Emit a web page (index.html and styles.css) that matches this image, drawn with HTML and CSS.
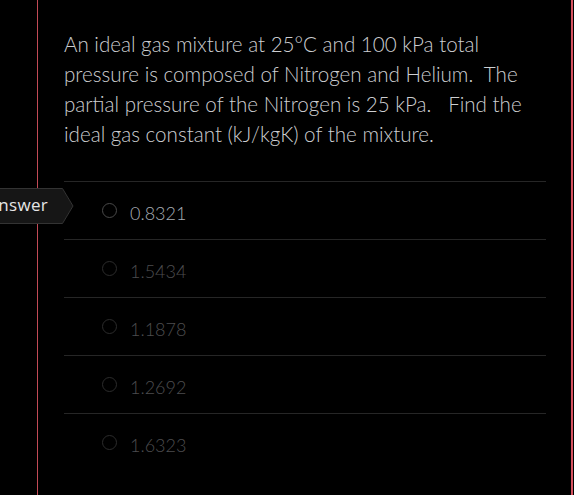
FILE: index.html
```html
<!DOCTYPE html>
<html>
<head>
<meta charset="utf-8">
<link rel="stylesheet" href="styles.css">
</head>
<body>
<div class="frame">
  <p class="question">An ideal gas mixture at 25°C and 100 kPa total pressure is composed of Nitrogen and Helium.  The partial pressure of the Nitrogen is 25 kPa.   Find the ideal gas constant (kJ/kgK) of the mixture.</p>
  <ul class="options">
    <li class="option active"><span class="radio"></span><span class="label">0.8321</span></li>
    <li class="option"><span class="radio"></span><span class="label">1.5434</span></li>
    <li class="option"><span class="radio"></span><span class="label">1.1878</span></li>
    <li class="option"><span class="radio"></span><span class="label">1.2692</span></li>
    <li class="option"><span class="radio"></span><span class="label">1.6323</span></li>
  </ul>
</div>
<div class="tab">
  <svg class="tab-shape" width="86" height="36" viewBox="0 0 86 36">
    <polygon points="0.5,0.5 74.5,0.5 85,18 74.5,35.5 0.5,35.5" fill="#161616" stroke="#333" stroke-width="1"/>
  </svg>
  <span class="tab-text">Answer</span>
</div>
</body>
</html>
```
FILE: styles.css
```css
html, body {
  margin: 0;
  padding: 0;
  background: #000;
  height: 495px;
  overflow: hidden;
}
.frame {
  margin-left: 37px;
  width: 482px;
  height: 495px;
  border-left: 1px solid #c24a56;
  border-right: 2px solid #d5525f;
  padding: 0 25px 0 26px;
  box-sizing: content-box;
  font-family: "Lato", "Liberation Sans", sans-serif;
}
.question {
  margin: 0;
  padding-top: 29px;
  width: 470px;
  font-size: 20.6px;
  font-weight: 300;
  line-height: 30px;
  color: #cdced1;
  white-space: pre-wrap;
}
.options {
  list-style: none;
  margin: 32px 0 0 0;
  padding: 0;
}
.option {
  height: 57px;
  border-top: 1px solid #262626;
  display: flex;
  align-items: center;
  padding-left: 38px;
  gap: 13px;
  font-size: 18px;
  font-weight: 300;
  color: #4d4d4f;
}
.option.active {
  color: #a7adb5;
}
.radio {
  width: 13px;
  height: 13px;
  border: 1.5px solid #2c2c2c;
  border-radius: 50%;
}
.option.active .radio {
  border-color: #4a4a4a;
}
.label {
  position: relative;
  top: 2px;
}
.tab {
  position: absolute;
  left: -12px;
  top: 188px;
  width: 86px;
  height: 36px;
}
.tab-shape {
  position: absolute;
  left: 0;
  top: 0;
}
.tab-text {
  position: absolute;
  right: 26px;
  top: 6px;
  font-family: "Open Sans", "DejaVu Sans", sans-serif;
  font-size: 17px;
  line-height: 22px;
  color: #e6e6e6;
  letter-spacing: 0.3px;
}
```
